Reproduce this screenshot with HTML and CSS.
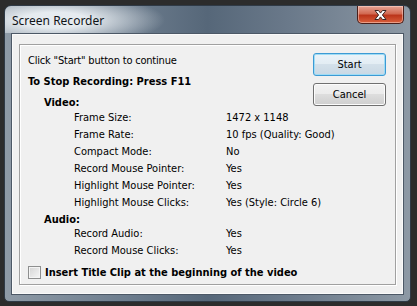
FILE: index.html
```html
<!DOCTYPE html>
<html lang="en">
<head>
    <meta charset="UTF-8">
    <title>Screen Recorder</title>
    <link rel="stylesheet" href="styles.css">
</head>
<body>
    <div class="window">
        <div class="titlebar">
            <span class="title">Screen Recorder</span>
            <div class="close">
                <svg width="17" height="12" viewBox="0 0 17 12">
                    <path d="M3 1.5h3.5l2 2.6 2-2.6H14l-3.6 4.5L14 10.5h-3.5l-2-2.6-2 2.6H3l3.6-4.5z" fill="#fff" stroke="#3a2624" stroke-width="1" stroke-linejoin="round"/>
                </svg>
            </div>
        </div>
        <div class="client">
            <div class="group">
                <div class="info">
                    <div class="line intro">Click "Start" button to continue</div>
                    <div class="line stop">To Stop Recording: Press F11</div>
                    <div class="line head video">Video:</div>
                    <div class="row"><span class="label">Frame Size:</span><span>1472 x 1148</span></div>
                    <div class="row"><span class="label">Frame Rate:</span><span>10 fps (Quality: Good)</span></div>
                    <div class="row"><span class="label">Compact Mode:</span><span>No</span></div>
                    <div class="row"><span class="label">Record Mouse Pointer:</span><span>Yes</span></div>
                    <div class="row"><span class="label">Highlight Mouse Pointer:</span><span>Yes</span></div>
                    <div class="row"><span class="label">Highlight Mouse Clicks:</span><span>Yes (Style: Circle 6)</span></div>
                    <div class="line head audio">Audio:</div>
                    <div class="row"><span class="label">Record Audio:</span><span>Yes</span></div>
                    <div class="row"><span class="label">Record Mouse Clicks:</span><span>Yes</span></div>
                    <label class="check"><span class="box"></span>Insert Title Clip at the beginning of the video</label>
                </div>
                <div class="buttons">
                    <button class="btn default">Start</button>
                    <button class="btn">Cancel</button>
                </div>
            </div>
        </div>
    </div>
</body>
</html>
```

FILE: styles.css
```css
body {
    margin: 0;
    background-color: #2c2c2c;
    font-family: "DejaVu Sans Condensed", "DejaVu Sans", sans-serif;
    font-stretch: condensed;
    font-size: 11px;
    color: #000;
}
.window {
    margin: 5px 0 0 4px;
    width: 407px;
    height: 297px;
    box-sizing: border-box;
    border: 1px solid #2f3a46;
    border-radius: 7px 7px 5px 5px;
    background: linear-gradient(90deg, #8e9aa6 0%, #6d7d8e 30%, #566779 50%, #6a798a 70%, #8d99a5 100%);
    display: flex;
    flex-direction: column;
    overflow: hidden;
}
.titlebar {
    height: 27px;
    flex-shrink: 0;
    display: flex;
    align-items: flex-start;
    justify-content: space-between;
    background: radial-gradient(ellipse 110px 26px at 50px 14px, rgba(235, 240, 244, 0.95) 30%, rgba(235, 240, 244, 0) 100%);
}
.title {
    font-family: "Noto Sans", sans-serif;
    font-stretch: normal;
    font-size: 12px;
    margin: 6px 0 0 7px;
    color: #101418;
}
.close {
    width: 45px;
    height: 17px;
    margin-right: 6px;
    border: 1px solid #4a1f1a;
    border-top: none;
    border-radius: 0 0 5px 5px;
    background: linear-gradient(#e6a495 0%, #d26a52 45%, #bb351b 55%, #d9603c 100%);
    box-shadow: inset 0 0 0 1px rgba(255, 220, 210, 0.5);
    display: flex;
    align-items: center;
    justify-content: center;
}
.client {
    flex: 1;
    min-width: 0;
    margin: 0 6px 6px 6px;
    background-color: #f0f0f0;
    border: 1px solid #4c5866;
    box-shadow: inset 0 0 0 1px #fafafa;
    padding: 10px 7px 9px 7px;
    display: flex;
}
.group {
    flex: 1;
    min-width: 0;
    border: 1px solid #a0a0a0;
    box-shadow: 1px 1px 0 #fff, inset 1px 1px 0 #fff;
    display: flex;
    padding: 7px 9px 0 8px;
}
.info {
    flex: 1;
    min-width: 0;
}
.line, .row {
    height: 17px;
    line-height: 17px;
    white-space: nowrap;
}
.intro {
    letter-spacing: -0.2px;
}
.stop {
    font-weight: bold;
    margin-top: 4px;
}
.head {
    font-weight: bold;
    padding-left: 16px;
}
.video {
    margin-top: 4px;
    height: 15px;
}
.audio {
    margin-bottom: -3px;
}
.row {
    display: flex;
    padding-left: 46px;
}
.label {
    width: 152px;
    flex-shrink: 0;
}
.check {
    display: flex;
    align-items: center;
    font-weight: bold;
    white-space: nowrap;
    margin-top: 5px;
    height: 16px;
}
.box {
    width: 11px;
    height: 11px;
    flex-shrink: 0;
    border: 1px solid #8e8f8f;
    background: linear-gradient(135deg, #d4d4d4, #f6f6f6);
    box-shadow: inset 0 0 0 1px #f4f4f4;
    margin-right: 4px;
}
.buttons {
    flex-shrink: 0;
    display: flex;
    flex-direction: column;
    gap: 7px;
    padding-top: 1px;
}
.btn {
    width: 73px;
    height: 23px;
    font-family: inherit;
    font-stretch: condensed;
    font-size: 11px;
    color: #000;
    border: 1px solid #707070;
    border-radius: 3px;
    background: linear-gradient(#f2f2f2 0%, #ebebeb 50%, #dddddd 50%, #cfcfcf 100%);
    box-shadow: inset 0 0 0 1px #fcfcfc;
    padding: 0;
}
.default {
    border-color: #3c9ad4;
    background: linear-gradient(#eaf3f9 0%, #e2ecf3 50%, #d3e0ea 50%, #c9d8e4 100%);
    box-shadow: inset 0 0 0 1px #9fdcf5;
}
```
